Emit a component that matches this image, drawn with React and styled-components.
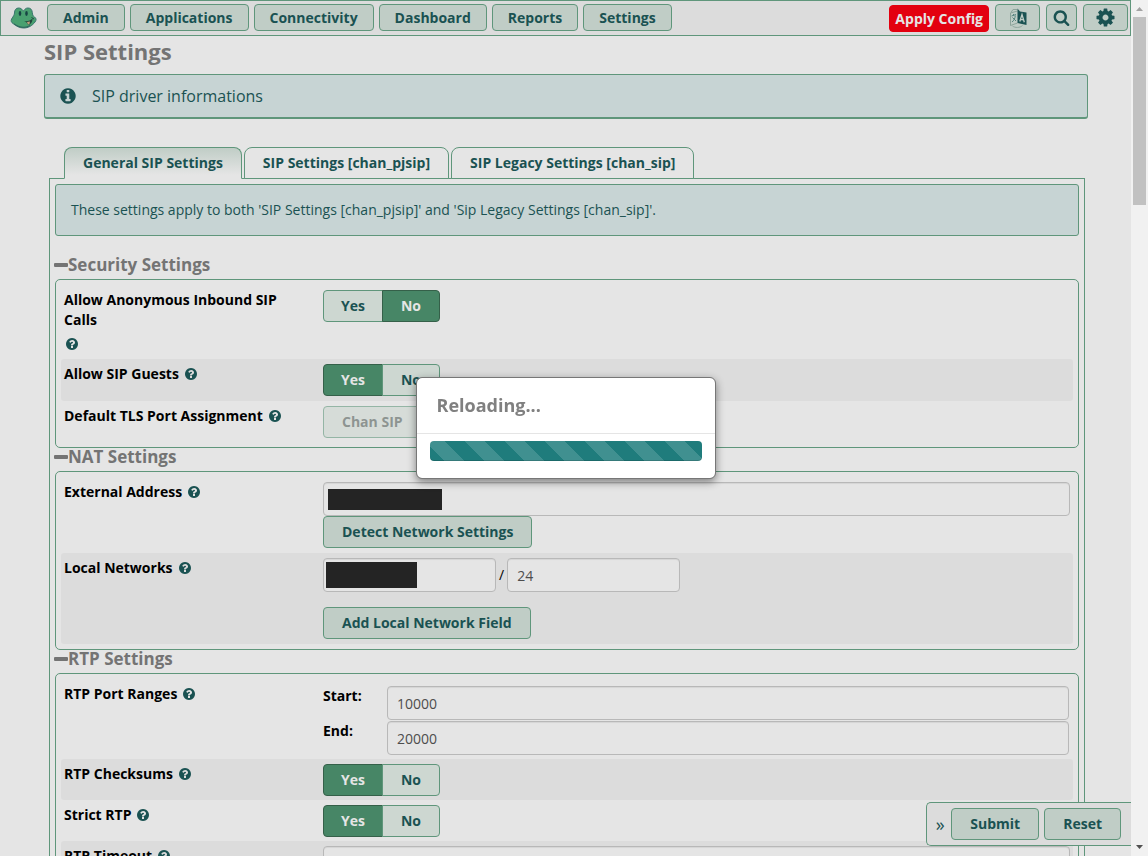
import React from 'react';
import styled, { createGlobalStyle, css } from 'styled-components';

const c = {
  page: '#e5e5e5',
  band: '#dcdcdc',
  button: '#c0cdc6',
  pale: '#cdd7d1',
  line: '#5f967b',
  ink: '#1a5252',
  info: '#c7d4d4',
  grey: '#747474',
  green: '#478666',
};

const GlobalStyle = createGlobalStyle`
  *, *::before, *::after { box-sizing: border-box; }
  body {
    margin: 0;
    background: ${c.page};
    font-family: "Open Sans", "Liberation Sans", sans-serif;
    font-size: 14px;
    line-height: 20px;
    color: #000;
  }
  button, input { font: inherit; margin: 0; }
`;

const Window = styled.div`
  display: grid;
  grid-template-columns: minmax(0, 1fr) 17px;
  height: 100vh;
  overflow: hidden;
`;

const Page = styled.div`
  min-width: 0;
  overflow: hidden;
`;

const ScrollTrack = styled.div`
  display: flex;
  flex-direction: column;
  align-items: center;
  background: #f1f1f1;
`;

const ScrollArrow = styled.svg`
  flex: none;
  width: 17px;
  height: 17px;
  fill: ${(p) => p.$tone};
`;

const ScrollThumb = styled.div`
  flex: none;
  width: 13px;
  height: 22%;
  margin-bottom: auto;
  background: #c1c1c1;
`;

const NavBar = styled.nav`
  display: flex;
  align-items: flex-start;
  height: 36px;
  padding: 3px 2px 0 9px;
  background: ${c.band};
  border: 1px solid ${c.line};
`;

const NavGroup = styled.div`
  display: flex;
  gap: ${(p) => p.$gap}px;
  margin-left: ${(p) => (p.$end ? 'auto' : '9px')};
`;

const NavButton = styled.button`
  display: flex;
  align-items: center;
  justify-content: center;
  height: 27px;
  min-width: ${(p) => p.$width || 0}px;
  padding: 0 ${(p) => (p.$width ? 0 : 15)}px;
  color: ${c.ink};
  font-weight: 700;
  background: ${c.button};
  border: 1px solid ${c.line};
  border-radius: 4px;
`;

const ApplyButton = styled(NavButton)`
  margin-top: 1px;
  padding: 0 5px;
  color: #e5e5e5;
  background: #e3000f;
  border-color: #e3000f;
`;

const Main = styled.main`
  padding: 0 43px 0 44px;
`;

const Title = styled.h1`
  margin: 0 0 8px;
  font-size: 22px;
  line-height: 30px;
  font-weight: 700;
  color: ${c.grey};
`;

const DriverInfo = styled.div`
  display: flex;
  align-items: center;
  gap: 15px;
  height: 45px;
  padding: 0 14px;
  font-size: 16px;
  color: ${c.ink};
  background: ${c.info};
  border: 1px solid ${c.line};
  border-bottom-width: 2px;
  border-radius: 3px;
`;

const TabList = styled.div`
  display: flex;
  gap: 2px;
  margin: 28px 0 -1px 20px;
`;

const Tab = styled.button`
  position: relative;
  height: 32px;
  padding: 0 18px;
  font-weight: 700;
  color: ${c.ink};
  border: 1px solid ${c.line};
  border-radius: 8px 8px 0 0;
  background: ${c.page};
  ${(p) =>
    p.$active &&
    css`
      background: linear-gradient(${c.button}, ${c.page} 90%);
      border-bottom-color: ${c.page};
    `}
`;

const Panel = styled.div`
  margin: 0 3px 0 5px;
  padding: 5px;
  border: 1px solid ${c.line};
`;

const Notice = styled.p`
  margin: 0 0 20px;
  padding: 15px;
  color: ${c.ink};
  background: ${c.info};
  border: 1px solid ${c.line};
  border-radius: 3px;
`;

const SectionTitle = styled.h2`
  display: flex;
  align-items: center;
  height: 23px;
  margin: 0 0 0 -1px;
  padding-bottom: 5px;
  font-size: 17px;
  line-height: 20px;
  font-weight: 700;
  color: ${c.grey};
`;

const Bar = styled.span`
  width: 14px;
  height: 4px;
  border-radius: 1px;
  background: ${c.grey};
`;

const SectionBox = styled.div`
  padding: 5px;
  border: 1px solid ${c.line};
  border-radius: 5px;
`;

const FieldRow = styled.div`
  display: grid;
  grid-template-columns: minmax(0, 1fr) minmax(0, 3fr);
  column-gap: 10px;
  padding: 5px 3px ${(p) => (p.$dense ? 4 : 5)}px;
  border-radius: 3px;
  background: ${(p) => (p.$shaded ? c.band : 'transparent')};
`;

const LabelCell = styled.div`
  display: flex;
  flex-wrap: wrap;
  align-items: flex-start;
  align-content: flex-start;
  font-weight: 700;
`;

const HelpMark = styled.span`
  display: flex;
  align-items: center;
  height: 20px;
  margin-left: ${(p) => (p.$below ? 1 : 5)}px;
  margin-top: ${(p) => (p.$below ? 4 : 0)}px;
`;

const Toggle = styled.div`
  display: flex;
  opacity: ${(p) => (p.$off ? 0.6 : 1)};
`;

const HiddenRadio = styled.input`
  position: absolute;
  width: 1px;
  height: 1px;
  opacity: 0;
`;

const ToggleLabel = styled.label`
  height: 32px;
  padding: 5px ${(p) => (p.$wide ? 18 : 17)}px;
  font-weight: 700;
  color: ${c.ink};
  background: ${c.pale};
  border: 1px solid ${c.line};
  &:first-of-type {
    border-top-left-radius: 4px;
    border-bottom-left-radius: 4px;
  }
  &:last-of-type {
    border-top-right-radius: 4px;
    border-bottom-right-radius: 4px;
  }
  & ~ & { margin-left: -1px; }
  ${HiddenRadio}:checked + & {
    color: #e5e5e5;
    background: ${c.green};
    border-color: #356049;
  }
  ${HiddenRadio}:disabled + & { color: #545f5a; }
`;

const ActionButton = styled.button`
  height: 32px;
  padding: 0 18px;
  font-weight: 700;
  color: ${c.ink};
  background: ${c.button};
  border: 1px solid ${c.line};
  border-radius: 4px;
`;

const TextInput = styled.input`
  display: block;
  width: 100%;
  height: 34px;
  padding: 1px 9px 0;
  color: #4d4d4d;
  background: ${c.page};
  border: 1px solid #b8b8b8;
  border-radius: 4px;
  box-shadow: inset 0 1px 1px rgba(0, 0, 0, 0.07);
`;

const InputWrap = styled.div`
  position: relative;
  flex: 0 1 ${(p) => (p.$short ? '173px' : '100%')};
`;

const Redaction = styled.span`
  position: absolute;
  left: ${(p) => p.$inset}px;
  top: ${(p) => (p.$tall ? 4 : 7)}px;
  width: ${(p) => p.$width}px;
  height: ${(p) => (p.$tall ? 26 : 21)}px;
  background: #242424;
`;

const NetworkLine = styled.div`
  display: flex;
  align-items: center;
  gap: 3px;
  margin-bottom: 15px;
`;

const PortGrid = styled.div`
  display: grid;
  grid-template-columns: 64px minmax(0, 1fr);
  row-gap: 1px;
  padding: 2px 1px 0 0;
  font-weight: 700;
`;

const PortInput = styled(TextInput)`
  font-weight: 400;
`;

const ActionBar = styled.div`
  position: fixed;
  right: 17px;
  bottom: 10px;
  display: flex;
  align-items: center;
  gap: 5px;
  height: 44px;
  padding: 0 10px 0 7px;
  background: ${c.band};
  border: 1px solid ${c.line};
  border-right: 0;
  border-radius: 5px 0 0 5px;
`;

const Collapse = styled.button`
  width: 12px;
  padding: 0;
  font-size: 18px;
  color: ${c.ink};
  background: none;
  border: 0;
`;

const Overlay = styled.div`
  position: fixed;
  inset: 0 17px 0 0;
  display: flex;
  align-items: center;
  justify-content: center;
`;

const Dialog = styled.div`
  width: 300px;
  background: #fff;
  background-clip: padding-box;
  border: 1px solid #777;
  border-radius: 6px;
  box-shadow: 0 3px 9px rgba(0, 0, 0, 0.45);
`;

const DialogTitle = styled.h2`
  margin: 0;
  padding: 17px 20px 18px;
  font-size: 18px;
  line-height: 20px;
  font-weight: 700;
  color: #808080;
  border-bottom: 1px solid #e5e5e5;
`;

const Progress = styled.div`
  height: 20px;
  margin: 7px 13px 17px;
  border-radius: 4px;
  background-color: #1f7c7c;
  background-image: linear-gradient(
    45deg,
    rgba(255, 255, 255, 0.15) 25%,
    transparent 25%,
    transparent 50%,
    rgba(255, 255, 255, 0.15) 50%,
    rgba(255, 255, 255, 0.15) 75%,
    transparent 75%
  );
  background-size: 40px 40px;
  background-position: -5px 0;
  box-shadow: inset 0 -1px 0 rgba(0, 0, 0, 0.15);
`;

const DISC =
  'M1664 896q0 209-103 385.5t-279.5 279.5-385.5 103-385.5-103-279.5-279.5-103-385.5 103-385.5 279.5-279.5 385.5-103 385.5 103 279.5 279.5 103 385.5z';

const PATHS = {
  info:
    'M1152 1376v-160q0-14-9-23t-23-9h-96v-512q0-14-9-23t-23-9h-320q-14 0-23 9t-9 23v160q0 14 9 23t23 9h96v320h-96q-14 0-23 9t-9 23v160q0 14 9 23t23 9h448q14 0 23-9t9-23zM1024 480v-160q0-14-9-23t-23-9h-192q-14 0-23 9t-9 23v160q0 14 9 23t23 9h192q14 0 23-9t9-23z' +
    DISC,
  question:
    'M1024 1376v-192q0-14-9-23t-23-9h-192q-14 0-23 9t-9 23v192q0 14 9 23t23 9h192q14 0 23-9t9-23zM1280 704q0-88-55.5-163t-138.5-116-170-41q-243 0-371 213-15 24 8 42l132 100q7 6 19 6 16 0 25-12 53-68 86-92 34-24 86-24 48 0 85.5 26t37.5 59q0 38-20 61t-68 45q-63 28-115.5 86.5t-52.5 125.5v36q0 14 9 23t23 9h192q14 0 23-9t9-23q0-19 21.5-49.5t54.5-49.5q32-18 49-28.5t46-35 44.5-48 28-60.5 12.5-81z' +
    DISC,
  search:
    'M1216 832q0-185-131.5-316.5t-316.5-131.5-316.5 131.5-131.5 316.5 131.5 316.5 316.5 131.5 316.5-131.5 131.5-316.5zm512 832q0 52-38 90t-90 38q-54 0-90-38l-343-342q-179 124-399 124-143 0-273.5-55.5t-225-150-150-225-55.5-273.5 55.5-273.5 150-225 225-150 273.5-55.5 273.5 55.5 225 150 150 225 55.5 273.5q0 220-124 399l343 343q37 37 37 90z',
  cog:
    'M1152 896q0-106-75-181t-181-75-181 75-75 181 75 181 181 75 181-75 75-181zm512-109v222q0 12-8 23t-20 13l-185 28q-19 54-39 91 35 50 107 138 10 12 10 25t-9 23q-27 37-99 108t-94 71q-12 0-26-9l-138-108q-44 23-91 38-16 136-29 186-7 28-36 28h-222q-14 0-24.5-8.5t-11.5-21.5l-28-184q-49-16-90-37l-141 107q-10 9-25 9-14 0-25-11-126-114-165-168-7-10-7-23 0-12 8-23 15-21 51-66.5t54-70.5q-27-50-41-99l-183-27q-13-2-21-12.5t-8-23.5v-222q0-12 8-23t19-13l186-28q14-46 39-92-40-57-107-138-10-12-10-24 0-10 9-23 26-36 98.5-107.5t94.5-71.5q13 0 26 10l138 107q44-23 91-38 16-136 29-186 7-28 36-28h222q14 0 24.5 8.5t11.5 21.5l28 184q49 16 90 37l142-107q9-9 24-9 13 0 25 10 129 119 165 170 7 8 7 22 0 12-8 23-15 21-51 66.5t-54 70.5q26 50 41 98l183 28q13 2 21 12.5t8 23.5z',
};

function Icon({ name, size }) {
  return (
    <svg width={size} height={size} viewBox="0 0 1792 1792" fill={c.ink} fillRule="evenodd" aria-hidden="true">
      <path d={PATHS[name]} />
    </svg>
  );
}

function FrogLogo() {
  return (
    <svg width="28" height="27" viewBox="0 0 28 27" aria-hidden="true">
      <path
        d="M8.500 4C6 4 4.500 6 4.500 9C4.300 11 3.500 12 1.600 15C.6 17 1.500 18.500 3 19.500C6 22 9.500 24 13.500 24C18 24 22 22 25 18C26.500 16 26.500 14.500 24.500 13C23 12 22.500 11 22.300 8.500C22 5.500 20.500 4 18 4C16 4 15 5 14.300 6.200C13.800 6.800 13 6.800 12.500 6.200C11.600 4.800 10.500 4 8.500 4Z"
        fill="#49a070"
        stroke="#38746d"
      />
      <path d="M4 19.800C9 23.500 15 24.500 20 21.500" fill="none" stroke="#2d645b" />
      <ellipse cx="10" cy="9.500" rx="1.300" ry="2.400" fill="#174444" />
      <ellipse cx="16.500" cy="9.500" rx="1.300" ry="2.400" fill="#174444" />
      <path d="M14 17C17.500 17.800 20.500 16.500 22.500 14.500C22.500 18 21 20.500 18 20.800C17.500 19 16 17.800 14 17Z" fill="#23463d" />
      <path d="M17 18L20 17.500L19.500 20L18 20.500Z" fill="#c0a07c" />
      <path d="M21.500 13.500L24 15" stroke="#23463d" />
    </svg>
  );
}

function LanguageIcon() {
  return (
    <svg width="18" height="20" viewBox="0 0 18 20" fill="none" aria-hidden="true">
      <path d="M8.500 3L1.500 5V17.500L8.500 15" stroke="#8da49b" />
      <path d="M2 4.500L4 1.500H8M3.500 18C6 20 11 20 13.500 17.500" stroke="#8da49b" />
      <path d="M2.500 8L7 6.500M4.500 6V7.500M3 14C5 12.500 6 10.500 6.300 7.500M3.500 9.500L7 13" stroke="#56857f" />
      <path d="M8.500 .5L11 3.500L17.500 4.500V17L8.500 15Z" fill={c.ink} />
      <path d="M10.800 13.500L13 6.500L15.300 14.300M11.500 11.300L14.600 11.900" stroke="#c0cdc6" strokeWidth="1.300" />
    </svg>
  );
}

function Label({ text, htmlFor, below }) {
  return (
    <LabelCell>
      <label htmlFor={htmlFor}>{text}</label>
      <HelpMark $below={below}>
        <Icon name="question" size={14} />
      </HelpMark>
    </LabelCell>
  );
}

function YesNo({ name, value, label }) {
  return (
    <Toggle role="radiogroup" aria-label={label}>
      {['Yes', 'No'].map((option) => (
        <React.Fragment key={option}>
          <HiddenRadio
            type="radio"
            name={name}
            id={option === 'Yes' ? name : name + option}
            defaultChecked={value === option}
          />
          <ToggleLabel htmlFor={option === 'Yes' ? name : name + option} $wide={option === 'No'}>
            {option}
          </ToggleLabel>
        </React.Fragment>
      ))}
    </Toggle>
  );
}

function ToggleRow({ text, name, value, shaded, dense, below }) {
  return (
    <FieldRow $shaded={shaded} $dense={dense}>
      <Label text={text} htmlFor={name} below={below} />
      <YesNo name={name} value={value} label={text} />
    </FieldRow>
  );
}

function Section({ title, children }) {
  return (
    <section>
      <SectionTitle>
        <Bar />
        {title}
      </SectionTitle>
      <SectionBox>{children}</SectionBox>
    </section>
  );
}

const MENUS = ['Admin', 'Applications', 'Connectivity', 'Dashboard', 'Reports', 'Settings'];
const TABS = ['General SIP Settings', 'SIP Settings [chan_pjsip]', 'SIP Legacy Settings [chan_sip]'];

export default function App() {
  return (
    <>
      <GlobalStyle />
      <Window>
        <Page>
          <NavBar>
            <FrogLogo />
            <NavGroup $gap={5}>
              {MENUS.map((menu) => (
                <NavButton key={menu} type="button">
                  {menu}
                </NavButton>
              ))}
            </NavGroup>
            <NavGroup $gap={6} $end>
              <ApplyButton type="button">Apply Config</ApplyButton>
              <NavButton type="button" $width={45} aria-label="Language">
                <LanguageIcon />
              </NavButton>
              <NavButton type="button" $width={31} aria-label="Search">
                <Icon name="search" size={17} />
              </NavButton>
              <NavButton type="button" $width={45} aria-label="Options">
                <Icon name="cog" size={21} />
              </NavButton>
            </NavGroup>
          </NavBar>

          <Main>
            <Title>SIP Settings</Title>
            <DriverInfo>
              <Icon name="info" size={18} />
              SIP driver informations
            </DriverInfo>

            <TabList role="tablist">
              {TABS.map((tab, i) => (
                <Tab key={tab} type="button" role="tab" aria-selected={i === 0} $active={i === 0}>
                  {tab}
                </Tab>
              ))}
            </TabList>

            <Panel role="tabpanel">
              <Notice>
                These settings apply to both 'SIP Settings [chan_pjsip]' and 'Sip Legacy Settings [chan_sip]'.
              </Notice>

              <Section title="Security Settings">
                <ToggleRow text="Allow Anonymous Inbound SIP Calls" name="anonymous" value="No" below />
                <ToggleRow text="Allow SIP Guests" name="guests" value="Yes" shaded />
                <FieldRow $dense>
                  <Label text="Default TLS Port Assignment" htmlFor="tlsport" />
                  <Toggle $off>
                    <HiddenRadio type="radio" id="tlsport" name="tlsport" disabled />
                    <ToggleLabel htmlFor="tlsport" $wide>
                      Chan SIP
                    </ToggleLabel>
                  </Toggle>
                </FieldRow>
              </Section>

              <Section title="NAT Settings">
                <FieldRow>
                  <Label text="External Address" htmlFor="external" />
                  <div>
                    <InputWrap>
                      <TextInput id="external" type="text" />
                      <Redaction $inset={5} $width={114} />
                    </InputWrap>
                    <ActionButton type="button">Detect Network Settings</ActionButton>
                  </div>
                </FieldRow>
                <FieldRow $shaded>
                  <Label text="Local Networks" htmlFor="network" />
                  <div>
                    <NetworkLine>
                      <InputWrap $short>
                        <TextInput id="network" type="text" />
                        <Redaction $inset={3} $width={91} $tall />
                      </InputWrap>
                      /
                      <InputWrap $short>
                        <TextInput type="text" defaultValue="24" aria-label="Network mask" />
                      </InputWrap>
                    </NetworkLine>
                    <ActionButton type="button">Add Local Network Field</ActionButton>
                  </div>
                </FieldRow>
              </Section>

              <Section title="RTP Settings">
                <FieldRow $dense>
                  <Label text="RTP Port Ranges" htmlFor="rtpstart" />
                  <PortGrid>
                    <label htmlFor="rtpstart">Start:</label>
                    <PortInput id="rtpstart" type="text" defaultValue="10000" />
                    <label htmlFor="rtpend">End:</label>
                    <PortInput id="rtpend" type="text" defaultValue="20000" />
                  </PortGrid>
                </FieldRow>
                <ToggleRow text="RTP Checksums" name="checksums" value="Yes" shaded dense />
                <ToggleRow text="Strict RTP" name="strict" value="Yes" dense />
                <FieldRow $shaded $dense>
                  <Label text="RTP Timeout" htmlFor="timeout" />
                  <TextInput id="timeout" type="text" />
                </FieldRow>
              </Section>
            </Panel>
          </Main>
        </Page>

        <ScrollTrack aria-hidden="true">
          <ScrollArrow viewBox="0 0 17 17" $tone="#a3a3a3">
            <path d="M5 11L8.500 7L12 11Z" />
          </ScrollArrow>
          <ScrollThumb />
          <ScrollArrow viewBox="0 0 17 17" $tone="#505050">
            <path d="M5 6L8.500 10L12 6Z" />
          </ScrollArrow>
        </ScrollTrack>
      </Window>

      <ActionBar>
        <Collapse type="button" aria-label="Collapse">
          »
        </Collapse>
        <ActionButton type="button">Submit</ActionButton>
        <ActionButton type="button">Reset</ActionButton>
      </ActionBar>

      <Overlay>
        <Dialog role="dialog" aria-labelledby="dialog-title">
          <DialogTitle id="dialog-title">Reloading...</DialogTitle>
          <Progress role="progressbar" aria-label="Reloading" />
        </Dialog>
      </Overlay>
    </>
  );
}
